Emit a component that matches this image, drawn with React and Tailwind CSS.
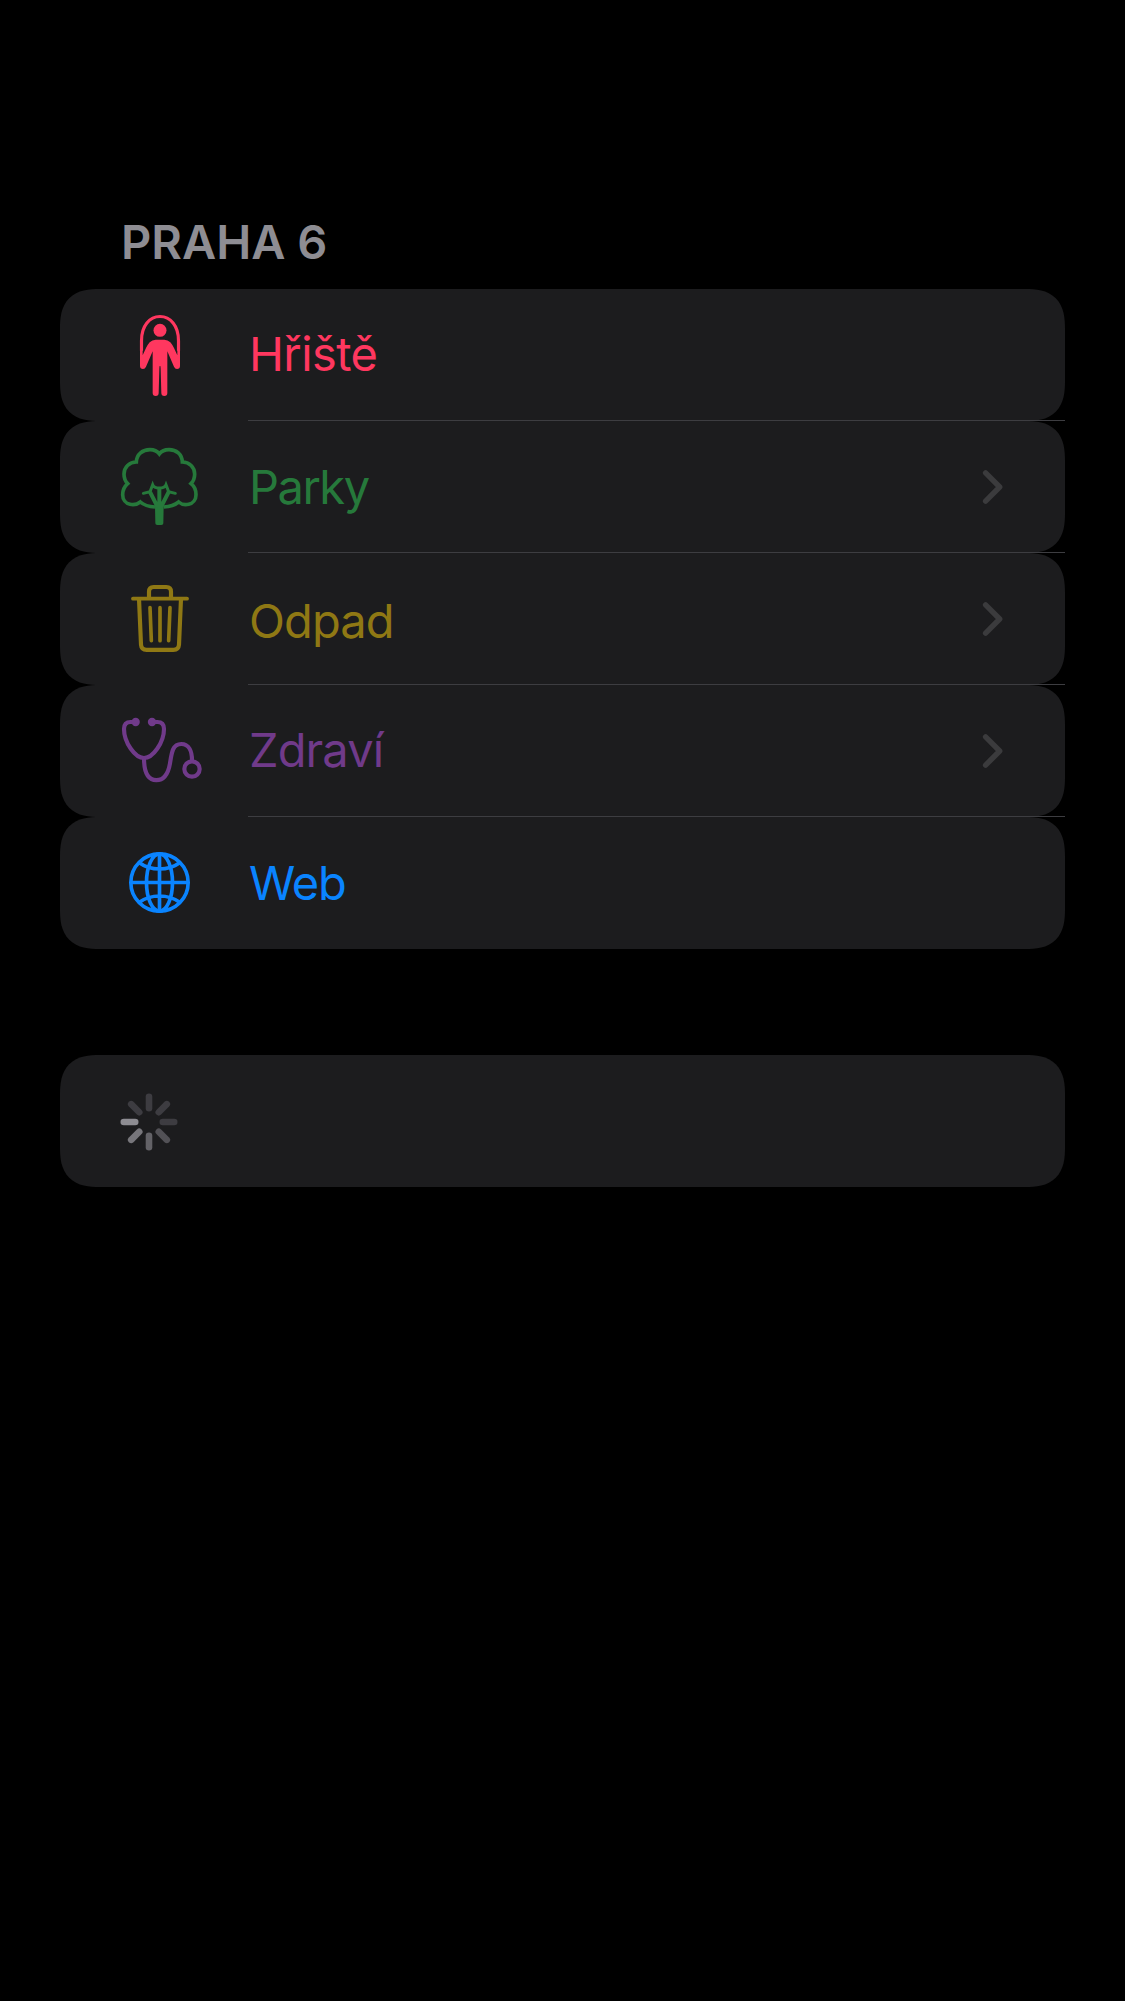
import React from "react";

function JumpRopeIcon() {
  return (
    <svg className="size-[100px]" viewBox="0 15 300 300" fill="currentColor">
      <path
        d="M94.500 152V122C94.500 77 119 49.500 150 49.500S205.500 77 205.500 122V152"
        fill="none"
        stroke="currentColor"
        strokeWidth="9.500"
      />
      <circle cx="150" cy="91" r="19.500" />
      <path d="M137 119H163Q173 119 181 127Q187 134 192 144L202 166V150H210V198Q210 207 201 207Q195 207 192 200L172 154V279A9 9 0 0 1 154 279L152 207Q152 197 150 197T148 207L146 279A9 9 0 0 1 128 279V154L108 200Q105 207 99 207Q90 207 90 198V150H98V166L108 144Q113 134 119 127Q127 119 137 119Z" />
    </svg>
  );
}

function TreeIcon() {
  return (
    <svg
      className="size-[100px]"
      viewBox="0 6 300 300"
      fill="none"
      stroke="currentColor"
      strokeLinecap="round"
      strokeLinejoin="miter"
    >
      <path
        strokeWidth="11"
        strokeLinecap="butt"
        d="M135 216C116 215 101 210 91 201C81 209 69 210 60 208C47 205 38 194 38 179C38 165 45 153 53 146C45 138 42 128 42 117C42 97 58 81 79 81C80 57 98 44 120 44C133 44 142 49 148 57C154 49 164 44 177 44C199 44 216 58 217 81C238 81 254 97 254 117C254 128 251 138 243 146C252 153 258 165 258 179C258 194 249 205 236 208C227 210 215 209 206 201C195 210 180 215 161 216"
      />
      <path
        fill="currentColor"
        stroke="none"
        d="M135 213L161 213L160 265Q160 270 154 270H142Q136 270 136 265Z"
      />
      <path strokeWidth="12" strokeLinecap="butt" d="M148 160V222M120 171L143 216M176 171L153 216" />
      <path
        strokeWidth="9"
        d="M100 175L120 170L128 149C133 162 163 162 168 149L176 170L196 175"
      />
    </svg>
  );
}

function TrashIcon() {
  return (
    <svg
      className="size-[100px]"
      viewBox="0 -3 300 300"
      fill="none"
      stroke="currentColor"
      strokeLinecap="round"
      strokeLinejoin="round"
    >
      <path strokeWidth="11.500" d="M69 86H231" />
      <path
        strokeWidth="12.500"
        strokeLinecap="butt"
        d="M117 85V65Q117 51 131 51H169Q183 51 183 65V85M87 86L93 224Q94 239.500 110 239.500H190Q206 239.500 207 224L213 86"
      />
      <path strokeWidth="11" d="M120 113L124 212M150 113V212M180 113L176 212" />
    </svg>
  );
}

function StethoscopeIcon() {
  return (
    <svg
      className="size-[100px]"
      viewBox="0 3 300 300"
      fill="none"
      stroke="currentColor"
      strokeWidth="12.500"
      strokeLinecap="round"
    >
      <path d="M77 66H62C49 66 42 73 42 87C42 127 75 174 102 174C129 174 162 127 162 87C162 73 155 66 142 66H126" />
      <path
        strokeLinecap="butt"
        d="M102 174C102 218 114 240.500 139 240.500C165 240.500 175 219 180 190C185 157 188 132 214 132C237 132 246 154 246 181"
      />
      <circle cx="77" cy="66" r="12.500" fill="currentColor" stroke="none" />
      <circle cx="126" cy="66" r="12.500" fill="currentColor" stroke="none" />
      <circle cx="246" cy="207" r="23" />
    </svg>
  );
}

function GlobeIcon() {
  return (
    <svg
      className="size-[100px]"
      viewBox="0 -6 300 300"
      fill="none"
      stroke="currentColor"
      strokeWidth="11"
    >
      <circle cx="148.500" cy="142.500" r="86" />
      <ellipse cx="148.500" cy="142.500" rx="39" ry="86" />
      <path d="M148.500 56V229M62 142.500H235M88 83Q114 102 148.500 102T209 83M88 202Q114 183 148.500 183T209 202" />
    </svg>
  );
}

function Chevron() {
  return (
    <svg
      className="mr-[62px] h-[36px] w-[22px]"
      viewBox="0 0 22 36"
      fill="none"
      stroke="#3b3b3d"
      strokeWidth="5.400"
      strokeLinecap="round"
      strokeLinejoin="round"
    >
      <path d="M4.600 3.800L18.700 18L4.600 32.200" />
    </svg>
  );
}

const spokes = [
  { angle: 0, color: "#3d3c41" },
  { angle: 45, color: "#3d3c41" },
  { angle: 90, color: "#3d3c41" },
  { angle: 135, color: "#525156" },
  { angle: 180, color: "#636267" },
  { angle: 225, color: "#77767b" },
  { angle: 270, color: "#8d8c92" },
  { angle: 315, color: "#3d3c41" },
];

function Spinner() {
  return (
    <svg className="mt-px size-[58px]" viewBox="-29 -29 58 58">
      {spokes.map((s) => (
        <rect
          key={s.angle}
          x="-3.300"
          y="-28.500"
          width="6.600"
          height="18"
          rx="3.300"
          fill={s.color}
          transform={`rotate(${s.angle})`}
        />
      ))}
    </svg>
  );
}

const rows = [
  { label: "Hřiště", Icon: JumpRopeIcon, color: "text-[#ff375f]", shift: "pb-[2px]", spacing: "tracking-[-0.6px]" },
  { label: "Parky", Icon: TreeIcon, color: "text-[#26793b]", shift: "pb-0", spacing: "tracking-[-1.5px]", chevron: true },
  { label: "Odpad", Icon: TrashIcon, color: "text-[#8f7814]", shift: "pt-[4px]", spacing: "tracking-[-0.9px]", chevron: true },
  { label: "Zdraví", Icon: StethoscopeIcon, color: "text-[#703a8a]", shift: "pb-[2px]", spacing: "tracking-[-0.9px]", chevron: true },
  { label: "Web", Icon: GlobeIcon, color: "text-[#0a84ff]", shift: "pb-0", spacing: "tracking-[-1.2px]" },
];

function Row({ label, Icon, color, shift, spacing, chevron, divider }) {
  return (
    <li className="relative h-[132px]">
      <div className="flex h-full items-center rounded-[40px] bg-[#1c1c1e] pl-[50px] [corner-shape:superellipse(1.4)]">
        <span className={color}>
          <Icon />
        </span>
        <span className={`ml-[39px] grow text-[47px] leading-[56px] ${color} ${shift} ${spacing}`}>
          {label}
        </span>
        {chevron && <Chevron />}
      </div>
      {divider && <div className="absolute right-0 bottom-0 left-[188px] h-px bg-[#3d3d41]" />}
    </li>
  );
}

export default function App() {
  return (
    <main className="flex min-h-[2001px] flex-col bg-black px-[60px] pt-[214px] font-['Inter',sans-serif]">
      <h2 className="h-[75px] pl-[61px] text-[47px] leading-[56px] font-semibold text-[#8e8d93]">
        PRAHA 6
      </h2>
      <ul>
        {rows.map((row, i) => (
          <Row key={row.label} {...row} divider={i < rows.length - 1} />
        ))}
      </ul>
      <section className="mt-[106px] flex h-[132px] items-center rounded-[40px] bg-[#1c1c1e] pl-[60px] [corner-shape:superellipse(1.4)]">
        <Spinner />
      </section>
    </main>
  );
}
